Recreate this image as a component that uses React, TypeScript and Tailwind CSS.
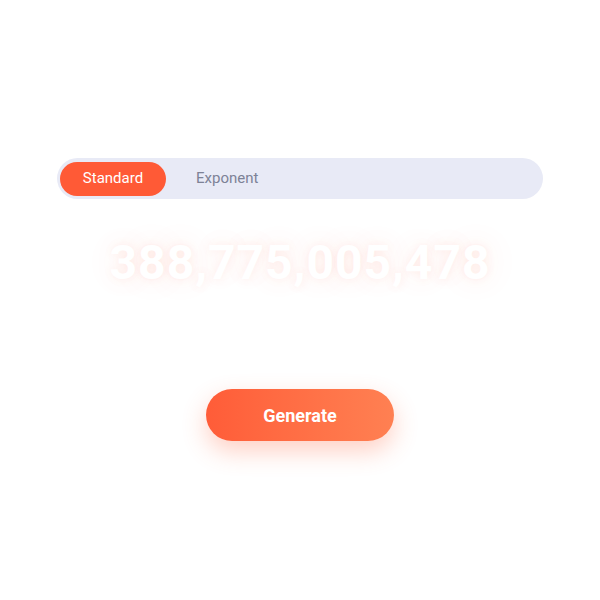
import React, { useState } from "react";

export default function App() {
  const [mode, setMode] = useState<"standard" | "exponent">("standard");
  const value = "388,775,005,478";

  return (
    <div className="w-[600px] h-[600px] bg-white flex flex-col items-center" style={{ fontFamily: "Roboto, 'Liberation Sans', sans-serif" }}>
      <div className="mt-[158px] w-[486px] h-[41px] rounded-full bg-[#e8eaf6] flex items-center px-[3px] gap-[30px]">
        <button
          onClick={() => setMode("standard")}
          className="h-[34px] w-[106px] rounded-full bg-[#ff5a36] text-white text-[15px] flex items-center justify-center"
        >
          Standard
        </button>
        <button
          onClick={() => setMode("exponent")}
          className="text-[15px] text-[#7d8296]"
        >
          Exponent
        </button>
      </div>

      <div className="mt-[32px] h-[64px] flex items-center justify-center">
        <span
          className="text-[48px] font-bold text-white tracking-[1px] leading-none"
          style={{
            textShadow:
              "0 0 8px rgba(255,110,80,0.1), 0 0 24px rgba(255,110,80,0.08), 0 0 50px rgba(255,110,80,0.08)",
          }}
        >
          {mode === "standard" ? value : "3.88775005478e11"}
        </span>
      </div>

      <button className="mt-[94px] w-[188px] h-[52px] rounded-full bg-gradient-to-r from-[#ff5c38] to-[#ff8052] text-white text-[18px] font-bold shadow-[0_10px_24px_rgba(255,100,60,0.3)]">
        Generate
      </button>
    </div>
  );
}
